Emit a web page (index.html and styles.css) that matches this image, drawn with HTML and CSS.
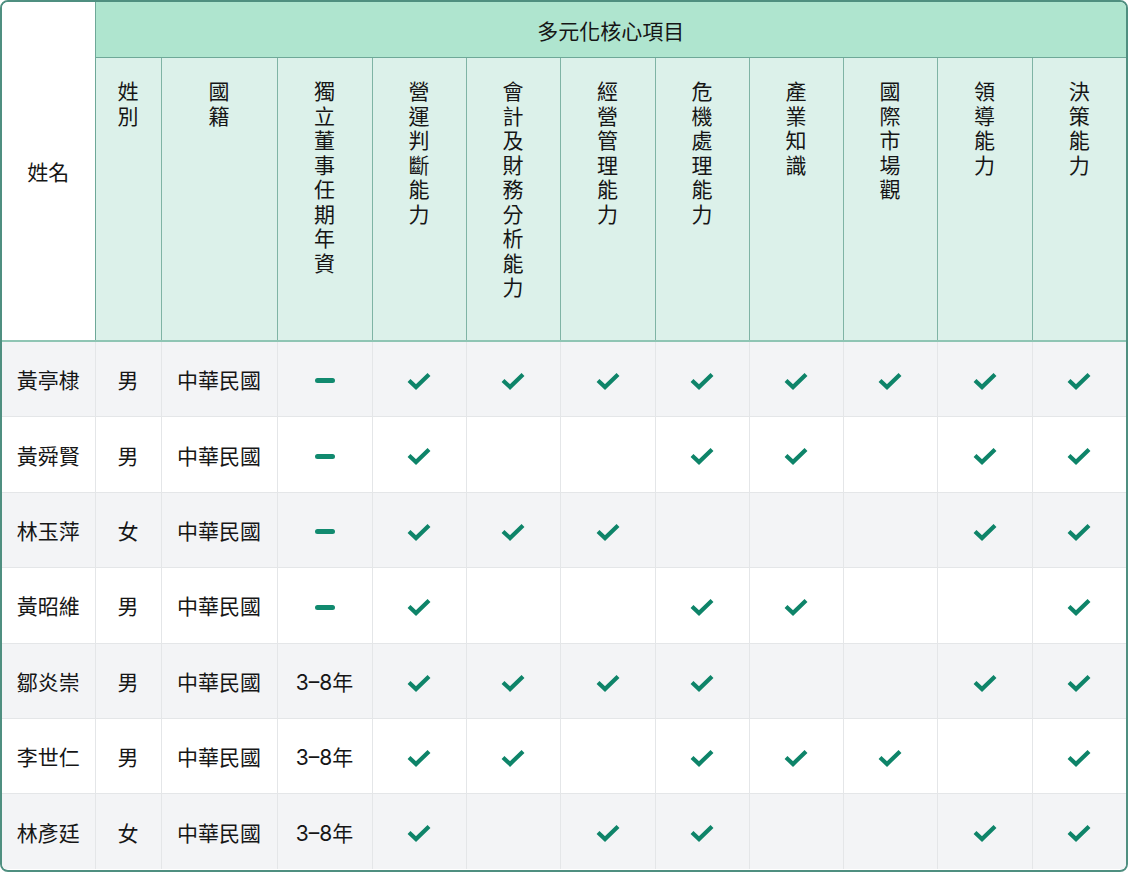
FILE: index.html
```html
<!DOCTYPE html>
<html lang="zh-Hant">
<head>
<meta charset="utf-8">
<title>多元化核心項目</title>
<link rel="stylesheet" href="styles.css">
</head>
<body>
<div class="frame">
<table class="grid">
<colgroup>
<col class="c-name"><col class="c-sex"><col class="c-nat"><col class="c-ind">
<col class="c-a"><col class="c-a"><col class="c-b"><col class="c-a"><col class="c-a"><col class="c-a"><col class="c-b"><col class="c-a">
</colgroup>
<thead>
<tr class="h1">
<th class="name-h" rowspan="2">姓名</th>
<th class="group" colspan="11">多元化核心項目</th>
</tr>
<tr class="h2">
<th><span class="vt">姓別</span></th>
<th><span class="vt">國籍</span></th>
<th><span class="vt">獨立董事任期年資</span></th>
<th><span class="vt">營運判斷能力</span></th>
<th><span class="vt">會計及財務分析能力</span></th>
<th><span class="vt">經營管理能力</span></th>
<th><span class="vt">危機處理能力</span></th>
<th><span class="vt">產業知識</span></th>
<th><span class="vt">國際市場觀</span></th>
<th><span class="vt">領導能力</span></th>
<th><span class="vt">決策能力</span></th>
</tr>
</thead>
<tbody id="rows"></tbody>
</table>
</div>
<script src="script.js"></script>
</body>
</html>
```
FILE: styles.css
```css
html, body {
  margin: 0;
  padding: 0;
  background: #ffffff;
}
body {
  font-family: Inter, "Noto Sans CJK TC", sans-serif;
  color: #161616;
}
.frame {
  width: 1128px;
  height: 872px;
  box-sizing: border-box;
  border: 2px solid #4f8f80;
  border-radius: 8px;
  overflow: hidden;
}
.grid {
  width: 1124px;
  table-layout: fixed;
  border-collapse: collapse;
  font-size: 21px;
}
.c-name { width: 93px; }
.c-sex { width: 66px; }
.c-nat { width: 116px; }
.c-ind { width: 95px; }
.c-a { width: 94px; }
.c-b { width: 95px; }
th {
  font-weight: 400;
  padding: 0;
}
.h1 th { height: 55px; }
.group {
  background: #afe5cf;
  border-bottom: 1px solid #6ea898;
  text-align: center;
  vertical-align: middle;
}
.name-h {
  background: #ffffff;
  border-right: 1px solid #6ea898;
  border-bottom: 2px solid #8fc5b4;
  vertical-align: middle;
  text-align: center;
}
.h2 th {
  height: 260px;
  background: #dcf1ea;
  border-left: 1px solid #7fb4a5;
  border-bottom: 2px solid #8fc5b4;
  vertical-align: top;
  text-align: center;
  padding-top: 22px;
}
.vt {
  display: inline-block;
  width: 1em;
  line-height: 24.5px;
  word-break: break-all;
  white-space: normal;
}
tbody td {
  height: 74.4px;
  border: 1px solid #e4e6e8;
  border-top: none;
  text-align: center;
  vertical-align: middle;
  padding: 0;
}
tbody td:first-child { border-left: none; }
tbody tr:last-child td { border-bottom: none; }
tbody td:last-child { border-right: none; }
tbody tr:nth-child(odd) td { background: #f3f4f6; }
tbody tr:nth-child(even) td { background: #ffffff; }
.check {
  display: inline-block;
  width: 24px;
  height: 18px;
  vertical-align: middle;
}
.dash {
  display: inline-block;
  width: 20px;
  height: 5px;
  border-radius: 3px;
  background: #118a6f;
  vertical-align: middle;
}
```
FILE: script.js
```js
const data = [
  ["黃亭棣","男","中華民國","-",[1,1,1,1,1,1,1,1]],
  ["黃舜賢","男","中華民國","-",[1,0,0,1,1,0,1,1]],
  ["林玉萍","女","中華民國","-",[1,1,1,0,0,0,1,1]],
  ["黃昭維","男","中華民國","-",[1,0,0,1,1,0,0,1]],
  ["鄒炎崇","男","中華民國","3–8年",[1,1,1,1,0,0,1,1]],
  ["李世仁","男","中華民國","3–8年",[1,1,0,1,1,1,0,1]],
  ["林彥廷","女","中華民國","3–8年",[1,0,1,1,0,0,1,1]]
];
const check = '<svg class="check" viewBox="0 0 24 18"><polyline points="2,8.5 9,15 22,2.5" fill="none" stroke="#0e8469" stroke-width="4.2"/></svg>';
const body = document.getElementById("rows");
let html = "";
for (const r of data) {
  html += "<tr><td>" + r[0] + "</td><td>" + r[1] + "</td><td>" + r[2] + "</td><td>" +
    (r[3] === "-" ? '<span class="dash"></span>' : r[3]) + "</td>";
  for (const v of r[4]) html += "<td>" + (v ? check : "") + "</td>";
  html += "</tr>";
}
body.innerHTML = html;
```
